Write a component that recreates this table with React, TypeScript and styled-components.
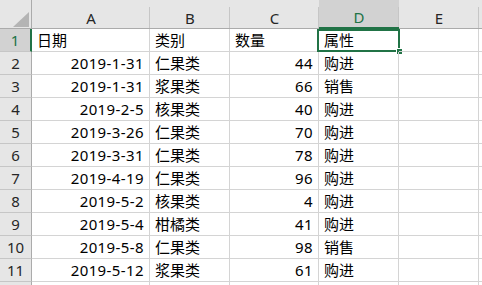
import React from 'react'
import styled, { createGlobalStyle } from 'styled-components'

const GlobalStyle = createGlobalStyle`
  html, body {
    margin: 0;
    padding: 0;
    background: #ffffff;
  }
  body {
    font-family: "Noto Sans", "Noto Sans CJK SC", sans-serif;
    overflow: hidden;
  }
`

const columns = [
  { key: 'A', width: 118 },
  { key: 'B', width: 80 },
  { key: 'C', width: 89 },
  { key: 'D', width: 80 },
  { key: 'E', width: 80 }
]

const rows = [
  ['日期', '类别', '数量', '属性'],
  ['2019-1-31', '仁果类', '44', '购进'],
  ['2019-1-31', '浆果类', '66', '销售'],
  ['2019-2-5', '核果类', '40', '购进'],
  ['2019-3-26', '仁果类', '70', '购进'],
  ['2019-3-31', '仁果类', '78', '购进'],
  ['2019-4-19', '仁果类', '96', '购进'],
  ['2019-5-2', '核果类', '4', '购进'],
  ['2019-5-4', '柑橘类', '41', '购进'],
  ['2019-5-8', '仁果类', '98', '销售'],
  ['2019-5-12', '浆果类', '61', '购进']
]

const template = `32px ${columns.map(c => `${c.width}px`).join(' ')} 1fr`

const Sheet = styled.div`
  width: 482px;
  height: 285px;
  overflow: hidden;
  display: grid;
  grid-template-columns: ${template};
  grid-template-rows: 29px repeat(12, 23px);
  color: #000000;
  font-size: 15px;
`

const HeadCell = styled.div<{ $active?: boolean }>`
  box-sizing: border-box;
  display: flex;
  align-items: center;
  justify-content: center;
  padding-top: 7px;
  background: ${p => (p.$active ? '#d2d2d2' : '#e6e6e6')};
  color: ${p => (p.$active ? '#217346' : '#262626')};
  border-bottom: ${p => (p.$active ? '2px solid #217346' : '1px solid #ababab')};
  position: relative;

  &::after {
    content: '';
    position: absolute;
    right: 0;
    top: 7px;
    bottom: 0;
    width: 1px;
    background: #c6c6c6;
  }
`

const Corner = styled.div`
  box-sizing: border-box;
  background: #e6e6e6;
  border-bottom: 1px solid #ababab;
  border-right: 1px solid #ababab;
  position: relative;

  &::after {
    content: '';
    position: absolute;
    left: 13px;
    top: 12px;
    width: 0;
    height: 0;
    border-style: solid;
    border-width: 0 0 15px 16px;
    border-color: transparent transparent #b4b4b4 transparent;
  }
`

const RowHead = styled.div<{ $active?: boolean }>`
  box-sizing: border-box;
  display: flex;
  align-items: center;
  justify-content: center;
  background: ${p => (p.$active ? '#d2d2d2' : '#e6e6e6')};
  color: ${p => (p.$active ? '#217346' : '#262626')};
  border-bottom: 1px solid #c6c6c6;
  border-right: ${p => (p.$active ? '2px solid #217346' : '1px solid #ababab')};
`

const Cell = styled.div<{ $align: 'left' | 'right' }>`
  box-sizing: border-box;
  position: relative;
  display: flex;
  align-items: center;
  justify-content: ${p => (p.$align === 'right' ? 'flex-end' : 'flex-start')};
  padding: 0 5px 0 5px;
  border-right: 1px solid #d4d4d4;
  border-bottom: 1px solid #d4d4d4;
  white-space: nowrap;
  line-height: 1;
  letter-spacing: ${p => (p.$align === 'right' ? '0.4px' : '0')};
`

const Selection = styled.div`
  position: absolute;
  left: -2px;
  right: -2px;
  top: 0;
  bottom: -1px;
  border: 2px solid #217346;
  pointer-events: none;
`

const Handle = styled.div`
  position: absolute;
  right: -4px;
  bottom: -4px;
  width: 5px;
  height: 5px;
  background: #217346;
  border-left: 1px solid #ffffff;
  border-top: 1px solid #ffffff;
`

const isNumeric = (v: string) => /^[0-9-]+$/.test(v)

export default function App() {
  return (
    <>
      <GlobalStyle />
      <Sheet>
        <Corner />
        {columns.map(c => (
          <HeadCell key={c.key} $active={c.key === 'D'}>
            {c.key}
          </HeadCell>
        ))}
        <HeadCell />
        {[...rows, ['', '', '', '']].map((r, i) => (
          <React.Fragment key={i}>
            <RowHead $active={i === 0}>{i < rows.length ? i + 1 : ''}</RowHead>
            {[...r, ''].map((v, j) => (
              <Cell key={j} $align={isNumeric(v) ? 'right' : 'left'}>
                {v}
                {i === 0 && j === 3 && (
                  <Selection>
                    <Handle />
                  </Selection>
                )}
              </Cell>
            ))}
            <Cell $align="left" />
          </React.Fragment>
        ))}
      </Sheet>
    </>
  )
}
